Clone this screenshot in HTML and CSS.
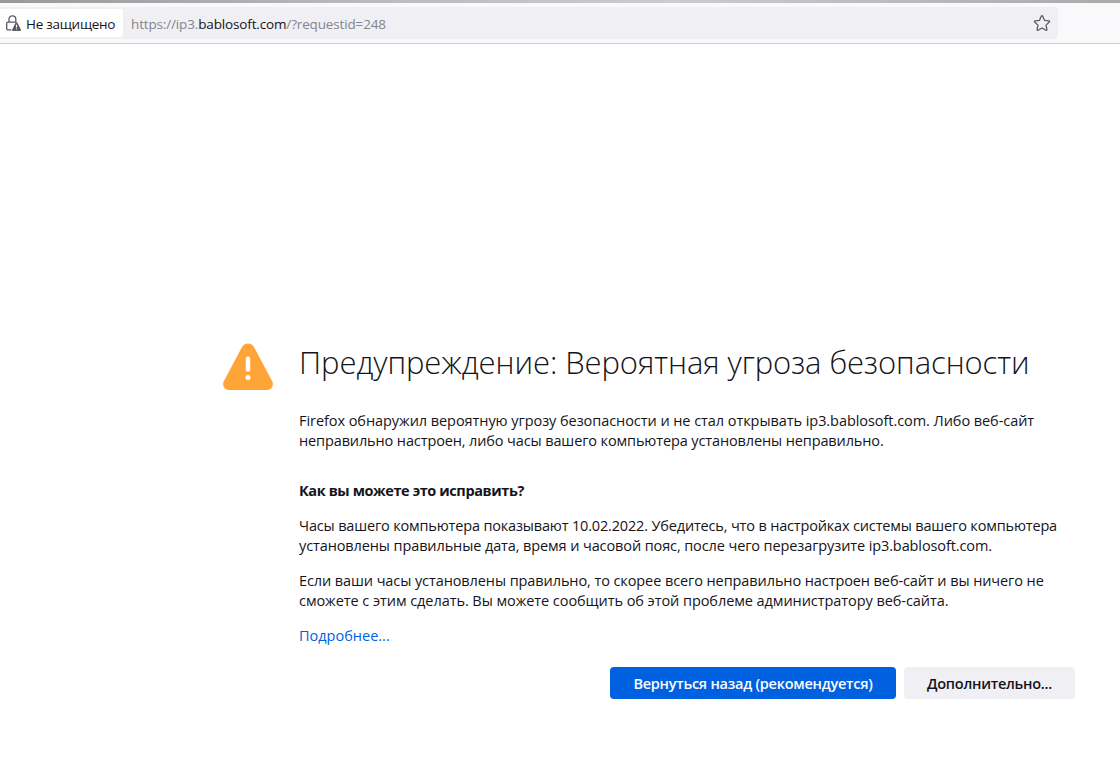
FILE: index.html
```html
<!DOCTYPE html>
<html lang="ru">
  <head>
    <meta charset="UTF-8" />
    <meta name="viewport" content="width=device-width, initial-scale=1.0" />
    <title>Предупреждение: Вероятная угроза безопасности</title>
    <link rel="stylesheet" href="styles.css">
  </head>
  <body>
    <header class="toolbar">
      <div class="urlbar">
        <div class="identity">
          <svg class="lock" width="16" height="18" viewBox="0 0 16 18" fill="none">
            <path d="M4 8.200V5.200a3.400 3.400 0 0 1 6.800 0V8.200M6.500 15.800H3a1.300 1.300 0 0 1-1.300-1.300V9.500A1.300 1.300 0 0 1 3 8.200h8.500" stroke="#5b5b66" stroke-width="1.300" />
            <path d="M11.500 8.300a1 1 0 0 1 .9.500l3.400 6.600a1 1 0 0 1-.9 1.500H8.100a1 1 0 0 1-.9-1.500l3.400-6.600a1 1 0 0 1 .9-.5z" fill="#5b5b66" />
            <path d="M11.500 10.800v2.800M11.500 14.400v1.200" stroke="#fff" stroke-width="1.100" />
          </svg>
          <span class="identity-label">Не защищено</span>
        </div>
        <div class="url">https://ip3.<b>bablosoft.com</b>/?requestid=248</div>
        <svg class="star" width="18" height="18" viewBox="0 0 18 18" fill="none">
          <path d="M8.400 2.100q.6-1 1.200 0l1.900 4.200 4.400.5q1.100.3.400 1.200l-3.300 3.100.9 4.400q0 1.100-1 .7L9 14l-3.900 2.200q-1 .4-1-.7l.9-4.400L1.700 8q-.7-.9.400-1.200l4.400-.5z" stroke="#5b5b66" stroke-width="1.300" stroke-linejoin="round" />
        </svg>
      </div>
    </header>
    <main class="error">
      <svg class="warning" width="50" height="48" viewBox="0 0 50 48">
        <path d="M25 .5c2.600 0 4.800 1.300 6 3.600l18.200 34.200c2 3.900-.6 8.700-5 8.700H5.800c-4.400 0-7-4.800-5-8.700L19 4.100c1.200-2.300 3.400-3.600 6-3.600z" fill="#ffa436" />
        <path d="M25 15.700v10.800" stroke="#fff" stroke-width="4.400" stroke-linecap="round" />
        <circle cx="25" cy="34.500" r="2.500" fill="#fff" />
      </svg>
      <div class="content">
        <h1>Предупреждение: Вероятная угроза безопасности</h1>
        <p class="intro"><span class="l1">Firefox обнаружил вероятную угрозу безопасности и не стал открывать ip3.bablosoft.com. Либо веб-сайт</span><br><span class="l2">неправильно настроен, либо часы вашего компьютера установлены неправильно.</span></p>
        <h2>Как вы можете это исправить?</h2>
        <p><span class="l3">Часы вашего компьютера показывают 10.02.2022. Убедитесь, что в настройках системы вашего компьютера</span><br><span class="l4">установлены правильные дата, время и часовой пояс, после чего перезагрузите ip3.bablosoft.com.</span></p>
        <p><span class="l5">Если ваши часы установлены правильно, то скорее всего неправильно настроен веб-сайт и вы ничего не</span><br><span class="l6">сможете с этим сделать. Вы можете сообщить об этой проблеме администратору веб-сайта.</span></p>
        <p><a href="#">Подробнее...</a></p>
        <div class="buttons">
          <button class="primary">Вернуться назад (рекомендуется)</button>
          <button class="secondary">Дополнительно...</button>
        </div>
      </div>
    </main>
  </body>
</html>
```
FILE: styles.css
```css
body {
  margin: 0;
  background: #fff;
  color: #15141a;
  font-family: "Open Sans", "Noto Sans", sans-serif;
  font-size: 14.5px;
  line-height: 20px;
}

/* browser toolbar */
.toolbar {
  box-sizing: border-box;
  height: 44px;
  padding-top: 7px;
  border-bottom: 1px solid #ccc;
  background: linear-gradient(to right, #999, #b8b8b8 30%, #ccc 60%, #aaa) top / 100% 3px no-repeat #f9f9fb;
}

.urlbar {
  display: flex;
  align-items: center;
  width: 1058px;
  height: 32px;
  border-radius: 0 4px 4px 0;
  background: #f0f0f4;
}

.identity {
  display: flex;
  align-items: center;
  box-sizing: border-box;
  width: 123px;
  height: 28px;
  padding-left: 5px;
  border-radius: 0 3px 3px 0;
  background: #fff;
  white-space: nowrap;
}

.identity-label {
  margin-left: 5px;
  padding-top: 2px;
  font-size: 13.5px;
  letter-spacing: -0.27px;
}

.url {
  flex: 1;
  padding: 2px 0 0 8px;
  color: #85858b;
  font-size: 13.5px;
  letter-spacing: -0.15px;
}

.url b {
  color: #15141a;
  font-weight: 400;
}

.star {
  margin-right: 7px;
}

/* error page */
.error {
  display: flex;
  padding: 299px 45px 0 223px;
}

.warning {
  flex: none;
}

.content {
  width: 776px;
  margin-left: 26px;
  white-space: nowrap;
}

h1 {
  margin: 0;
  font-size: 31px;
  font-weight: 300;
  line-height: 38px;
  letter-spacing: -0.08px;
}

p {
  margin: 0 0 15px;
}

.intro {
  margin: 30px 0;
}

h2 {
  margin: 0 0 15px;
  font-size: 14.5px;
  font-weight: 700;
  line-height: 20px;
  letter-spacing: -0.4px;
}

.l1 {
  letter-spacing: -0.06px;
}

.l2 {
  letter-spacing: -0.12px;
}

.l3 {
  letter-spacing: -0.166px;
}

.l4 {
  letter-spacing: -0.107px;
}

.l5 {
  letter-spacing: -0.09px;
}

.l6 {
  letter-spacing: -0.064px;
}

a {
  color: #0061e0;
  text-decoration: none;
}

.buttons {
  display: flex;
  justify-content: flex-end;
  gap: 8px;
  margin-top: 21px;
}

button {
  height: 32px;
  padding: 0;
  border: 0;
  border-radius: 4px;
  font: 600 14.5px "Open Sans", sans-serif;
  letter-spacing: -0.25px;
}

.primary {
  width: 286px;
  background: #0061e0;
  color: #fbfbfe;
}

.secondary {
  width: 171px;
  background: #f0f0f4;
  color: #15141a;
}
```
